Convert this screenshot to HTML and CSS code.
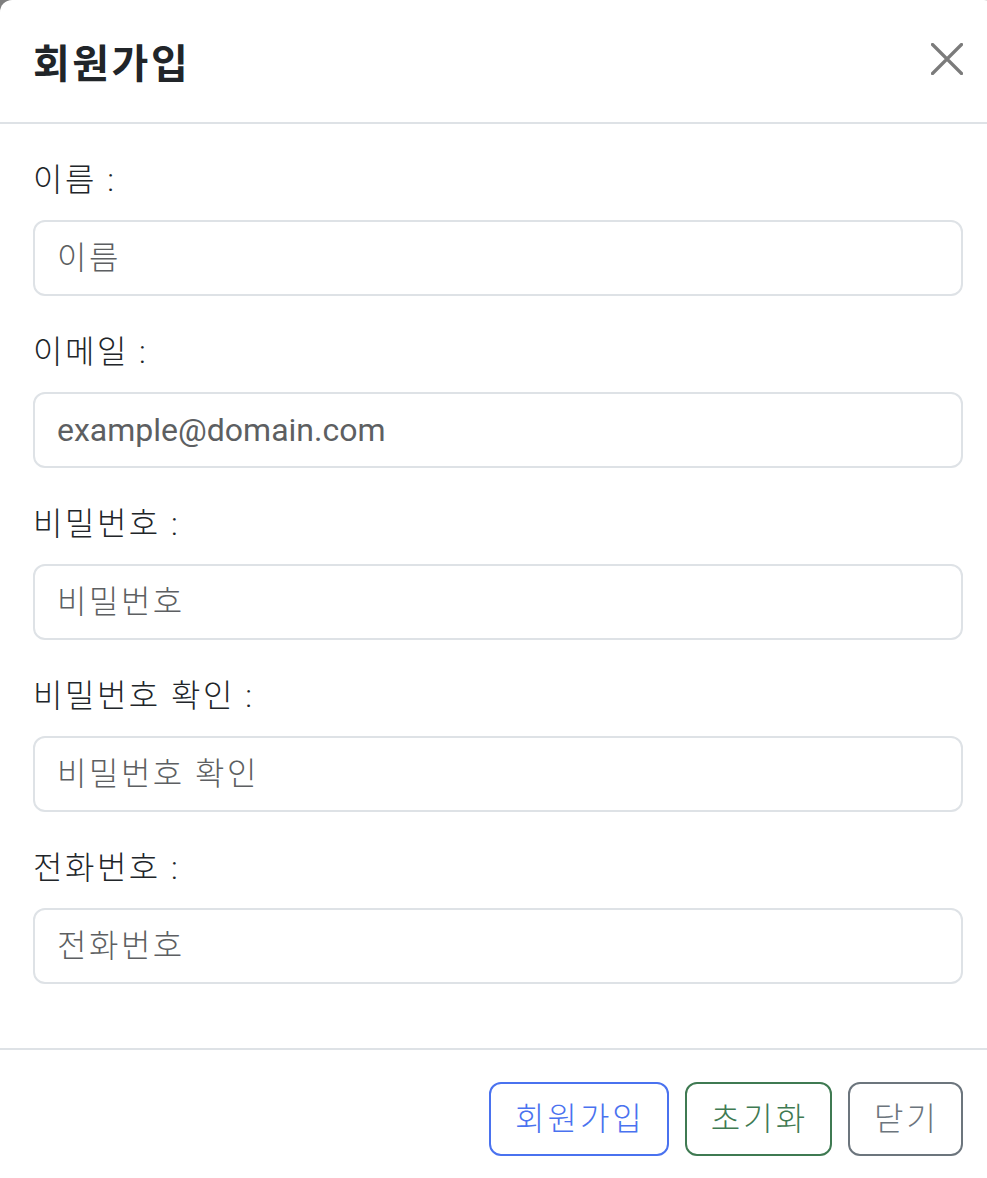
FILE: index.html
```html
<!DOCTYPE html>
<html lang="ko">
<head>
<meta charset="utf-8">
<title>회원가입</title>
<link rel="stylesheet" href="styles.css">
</head>
<body>
<div class="modal">
  <div class="modal-header">
    <h5 class="modal-title">회원가입</h5>
    <button class="btn-close" type="button" aria-label="Close">
      <svg width="32" height="32" viewBox="0 0 32 32"><path d="M1.5 1.5 L30.5 30.5 M30.5 1.5 L1.5 30.5" stroke="#7b7b7b" stroke-width="3.2" stroke-linecap="round" fill="none"/></svg>
    </button>
  </div>
  <div class="modal-body">
    <div class="group">
      <label class="form-label">이름 :</label>
      <input class="form-control" type="text" placeholder="이름">
    </div>
    <div class="group">
      <label class="form-label">이메일 :</label>
      <input class="form-control latin" type="email" placeholder="example@domain.com">
    </div>
    <div class="group">
      <label class="form-label">비밀번호 :</label>
      <input class="form-control" type="password" placeholder="비밀번호">
    </div>
    <div class="group">
      <label class="form-label">비밀번호 확인 :</label>
      <input class="form-control" type="password" placeholder="비밀번호 확인">
    </div>
    <div class="group">
      <label class="form-label">전화번호 :</label>
      <input class="form-control" type="tel" placeholder="전화번호">
    </div>
  </div>
  <div class="modal-footer">
    <button class="btn btn-primary" type="button">회원가입</button>
    <button class="btn btn-success" type="button">초기화</button>
    <button class="btn btn-secondary" type="button">닫기</button>
  </div>
</div>
</body>
</html>
```
FILE: styles.css
```css
html, body {
  margin: 0;
  padding: 0;
  height: 100%;
  overflow: hidden;
  background: #7f7f7f;
}

body {
  font-family: Roboto, "Noto Sans CJK KR", sans-serif;
  color: #212529;
}

.modal {
  width: 996px;
  box-sizing: border-box;
  background: #fff;
  border-top-left-radius: 12px;
  border-top-right-radius: 12px;
  min-height: 1300px;
}

.modal-header {
  display: flex;
  align-items: center;
  justify-content: space-between;
  height: 122px;
  padding: 0 33px;
  border-bottom: 2px solid #dee2e6;
}

.modal-title {
  margin: 0;
  font-family: "Noto Sans CJK KR", sans-serif;
  font-size: 40px;
  font-weight: 700;
  line-height: 48px;
  letter-spacing: 2.5px;
  color: #212529;
}

.btn-close {
  border: 0;
  background: transparent;
  padding: 0;
  width: 32px;
  height: 32px;
  display: flex;
  margin-top: -4px;
}

.modal-body {
  padding: 32px 33px;
}

.group {
  margin-bottom: 32px;
}

.form-label {
  display: block;
  font-size: 32px;
  font-weight: 300;
  line-height: 48px;
  letter-spacing: 2.5px;
  margin-bottom: 16px;
}

.form-control {
  display: block;
  width: 100%;
  box-sizing: border-box;
  height: 76px;
  padding: 12px 22px;
  font-family: inherit;
  font-size: 32px;
  font-weight: 300;
  line-height: 48px;
  letter-spacing: 2.5px;
  color: #212529;
  border: 2px solid #dee2e6;
  border-radius: 12px;
  background: #fff;
  outline: none;
}

.form-control.latin {
  letter-spacing: 0;
  font-weight: 400;
}

.form-control::placeholder {
  color: #5d5f62;
  opacity: 1;
}

.modal-footer {
  display: flex;
  justify-content: flex-end;
  gap: 16px;
  padding: 32px 33px 32px 33px;
  border-top: 2px solid #dee2e6;
}

.btn {
  font-family: inherit;
  font-size: 32px;
  font-weight: 300;
  line-height: 48px;
  letter-spacing: 3px;
  padding: 11px 22px 11px 24px;
  border: 2px solid;
  border-radius: 12px;
  background: #fff;
}

.btn-primary {
  color: #4a72ef;
  border-color: #4a72ef;
}

.btn-success {
  color: #3f7a52;
  border-color: #3f7a52;
}

.btn-secondary {
  color: #6c757d;
  border-color: #6c757d;
}
```
